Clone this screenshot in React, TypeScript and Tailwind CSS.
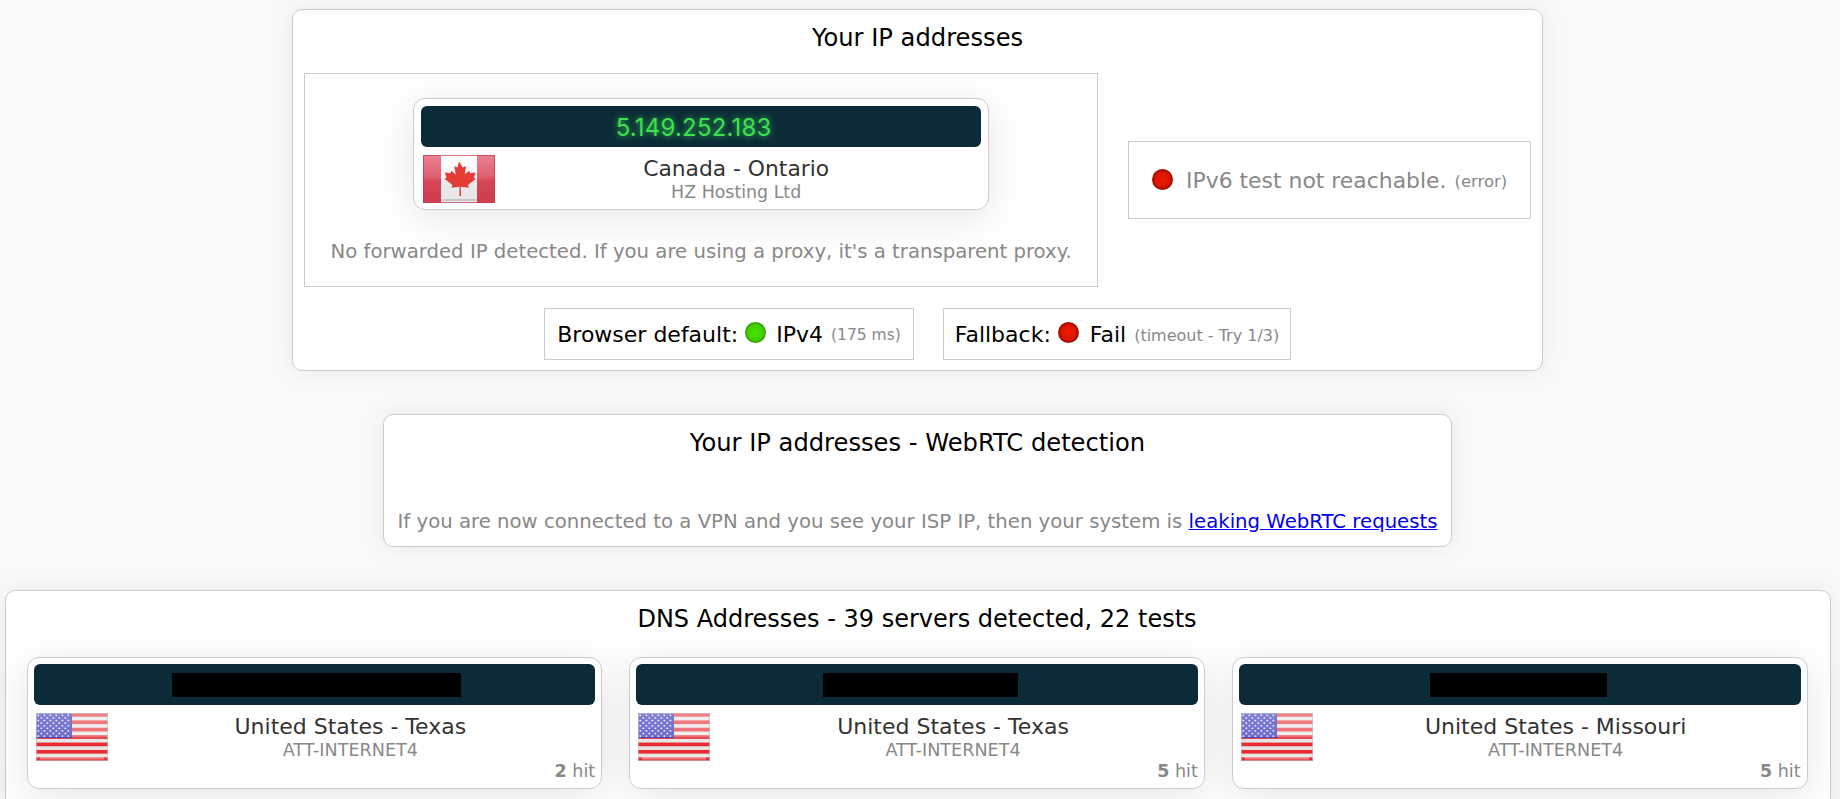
const sans = 'font-["DejaVu_Sans",Verdana,sans-serif]';

function CanadaFlag() {
  return (
    <svg width="72" height="48" viewBox="0 0 72 48" className="shrink-0">
      <defs>
        <linearGradient id="caRed" x1="0" y1="0" x2="0" y2="1">
          <stop offset="0" stopColor="#ea8290" />
          <stop offset="0.45" stopColor="#df6070" />
          <stop offset="0.55" stopColor="#d44555" />
          <stop offset="1" stopColor="#cf3d50" />
        </linearGradient>
        <linearGradient id="caWhite" x1="0" y1="0" x2="0" y2="1">
          <stop offset="0" stopColor="#ffffff" />
          <stop offset="0.5" stopColor="#f6f6f6" />
          <stop offset="0.55" stopColor="#ececec" />
          <stop offset="1" stopColor="#e6e6e6" />
        </linearGradient>
      </defs>
      <rect width="72" height="48" fill="url(#caWhite)" />
      <rect width="18" height="48" fill="url(#caRed)" />
      <rect x="54" width="18" height="48" fill="url(#caRed)" />
      <g transform="translate(36 24) scale(1.2 1.1) translate(-36 -23)">
        <path
          d="M36 7l3.2 5.6 2.7-1.2-1.2 7.6 3.6-3.6 1 2.4 4.6-.8-1.5 4.8 1.8 1-6.8 5.6.9 2.6-6.8-.9.2 8.3h-1.4l.2-8.3-6.8.9.9-2.6-6.8-5.6 1.8-1-1.5-4.8 4.6.8 1-2.4 3.6 3.6-1.2-7.6 2.7 1.2z"
          fill="#e33d35"
        />
      </g>
      <rect x="18" y="44" width="36" height="2" fill="#c9c9c9" />
      <rect x="0.5" y="0.5" width="71" height="47" fill="none" stroke="#c8384a" strokeOpacity="0.7" />
    </svg>
  );
}

const usStripes = [0, 1, 2, 3, 4, 5, 6];
const usDots = Array.from({ length: 9 }, (_, row) => row);

function UsFlag({ id }: { id: string }) {
  return (
    <svg width="72" height="48" viewBox="0 0 72 48" className="shrink-0">
      <defs>
        <linearGradient id={id} x1="0" y1="0" x2="0" y2="1">
          <stop offset="0" stopColor="#ffffff" stopOpacity="0.4" />
          <stop offset="0.5" stopColor="#ffffff" stopOpacity="0.3" />
          <stop offset="0.52" stopColor="#ffffff" stopOpacity="0" />
          <stop offset="1" stopColor="#ffffff" stopOpacity="0" />
        </linearGradient>
      </defs>
      <rect width="72" height="48" fill="#e6e6e6" />
      {usStripes.map((i) => (
        <rect key={i} y={i * 7.39} width="72" height="3.7" fill="#e82e34" />
      ))}
      <rect width="36" height="25" fill="#2a2ab8" />
      {usDots.map((row) =>
        Array.from({ length: row % 2 ? 5 : 6 }, (_, col) => (
          <rect
            key={`${row}-${col}`}
            x={(row % 2 ? 4.5 : 1.5) + col * 6}
            y={1.6 + row * 2.6}
            width="1.7"
            height="1.5"
            fill="#eeeefa"
          />
        )),
      )}
      <rect width="72" height="48" fill={`url(#${id})`} />
      <rect y="44" x="4" width="64" height="2.5" fill="#ffffff" fillOpacity="0.35" />
      <rect x="0.5" y="0.5" width="71" height="47" fill="none" stroke="#c9c9c9" strokeOpacity="0.6" />
    </svg>
  );
}

function Led({ color }: { color: 'red' | 'green' }) {
  return (
    <span
      className={
        color === 'red'
          ? 'inline-block shrink-0 w-[21px] h-[21px] rounded-full -mt-[3px] bg-[radial-gradient(circle_at_50%_50%,#f01c00,#d81400_50%,#8a0c00_72%,#5a2a24_82%,#aaa_100%)]'
          : 'inline-block shrink-0 w-[21px] h-[21px] rounded-full -mt-[3px] bg-[radial-gradient(circle_at_50%_50%,#4ee600,#3ecc00_55%,#2a8a00_72%,#3a5a2a_82%,#aaa_100%)]'
      }
    />
  );
}

function IpCard() {
  return (
    <div className="w-[576px] h-[112px] bg-white border border-[#ccc] rounded-[12px] p-[7px] shadow-[0_8px_40px_rgba(0,0,0,0.1)]">
      <div className="h-[41px] pt-[3px] pr-[15px] rounded-[6px] bg-[#0c2b38] flex items-center justify-center text-[24px] font-normal tracking-[0.2px] text-[#3fe04f] font-['Inter',sans-serif] [text-shadow:0_0_6px_#2fd24a]">
        5.149.252.183
      </div>
      <div className="flex mt-2 pl-[2px]">
        <CanadaFlag />
        <div className="flex-1 text-center pt-[1px] pr-[4px]">
          <div className="text-[21.8px] leading-[25px] text-[#333]">Canada - Ontario</div>
          <div className="text-[17.4px] leading-[23px] text-[#888]">HZ Hosting Ltd</div>
        </div>
      </div>
    </div>
  );
}

function DnsCard({ region, hits, redact, id }: { region: string; hits: number; redact: string; id: string }) {
  return (
    <div className="flex-1 h-[132px] bg-white border border-[#ccc] rounded-[12px] p-[6px] shadow-[0_8px_40px_rgba(0,0,0,0.1)]">
      <div className="h-[41px] rounded-[6px] bg-[#0c2b38] flex items-center justify-center">
        <div className={`h-[24px] bg-black ${redact}`} />
      </div>
      <div className="flex mt-2 pl-[2px] h-[48px]">
        <UsFlag id={id} />
        <div className="flex-1 text-center pt-[1px] pr-[2px]">
          <div className="text-[22px] leading-[25px] text-[#333]">{region}</div>
          <div className="text-[17.6px] leading-[23px] text-[#888]">ATT-INTERNET4</div>
        </div>
      </div>
      <div className="mt-[1px] text-right text-[17.5px] leading-[18px] text-[#888]">
        <b>{hits}</b> hit
      </div>
    </div>
  );
}

export default function App() {
  return (
    <div className={`h-screen overflow-hidden bg-[#f9f9f9] text-black ${sans}`}>
      <div className="w-[1835px] pt-[9px] flex flex-col items-center">
        {/* Your IP addresses */}
        <section className="w-[1251px] h-[362px] bg-white border border-[#ccc] rounded-[10px] px-[11px] shadow-[0_0_24px_rgba(0,0,0,0.07)]">
          <h2 className="text-[24.2px] leading-[30px] text-center pt-[13px] h-[63px] box-border">Your IP addresses</h2>
          <div className="flex items-start">
            <div className="w-[795px] h-[214px] border border-[#ccc] pt-6 flex flex-col items-center">
              <IpCard />
              <p className="mt-[30px] text-[19.7px] leading-[24px] text-[#888]">
                No forwarded IP detected. If you are using a proxy, it's a transparent proxy.
              </p>
            </div>
            <div className="ml-[30px] mt-[68px] w-[403px] h-[78px] border border-[#ccc] flex items-center justify-center pt-[2px] text-[21.9px] text-[#888]">
              <Led color="red" />
              <span className="ml-[13px]">IPv6 test not reachable.</span>
              <span className="ml-2 text-[16.5px] mt-[3px]">(error)</span>
            </div>
          </div>
          <div className="flex justify-center gap-[29px] mt-[21px]">
            <div className="w-[370px] h-[52px] border border-[#ccc] flex items-center justify-center text-[22px]">
              Browser default:&nbsp;<Led color="green" />
              <span className="ml-[10px]">IPv4</span>
              <span className="ml-2 text-[15.5px] mt-[3px] text-[#888]">(175 ms)</span>
            </div>
            <div className="w-[348px] h-[52px] border border-[#ccc] flex items-center justify-center text-[22px]">
              Fallback:&nbsp;<Led color="red" />
              <span className="ml-[11px]">Fail</span>
              <span className="ml-2 text-[16px] mt-[3px] text-[#888]">(timeout - Try 1/3)</span>
            </div>
          </div>
        </section>

        {/* WebRTC */}
        <section className="mt-[43px] w-[1069px] h-[133px] bg-white border border-[#ccc] rounded-[10px] shadow-[0_0_24px_rgba(0,0,0,0.07)] text-center">
          <h2 className="text-[24.2px] leading-[30px] pt-[13px] h-[95px]">Your IP addresses - WebRTC detection</h2>
          <p className="text-[19.7px] leading-[24px] text-[#888]">
            If you are now connected to a VPN and you see your ISP IP, then your system is{' '}
            <a href="#" className="text-[#0000ee] underline">leaking WebRTC requests</a>
          </p>
        </section>

        {/* DNS */}
        <section className="mt-[43px] w-[1826px] h-[300px] bg-white border border-[#ccc] rounded-[10px] pl-[21px] pr-[22px] shadow-[0_0_24px_rgba(0,0,0,0.07)]">
          <h2 className="text-[24px] leading-[30px] text-center pt-[13px] h-[66px]">DNS Addresses - 39 servers detected, 22 tests</h2>
          <div className="flex gap-[27px]">
            <DnsCard id="usA" region="United States - Texas" hits={2} redact="w-[289px] ml-[4px]" />
            <DnsCard id="usB" region="United States - Texas" hits={5} redact="w-[195px] ml-[7px]" />
            <DnsCard id="usC" region="United States - Missouri" hits={5} redact="w-[177px] -ml-[2px]" />
          </div>
        </section>
      </div>
    </div>
  );
}
